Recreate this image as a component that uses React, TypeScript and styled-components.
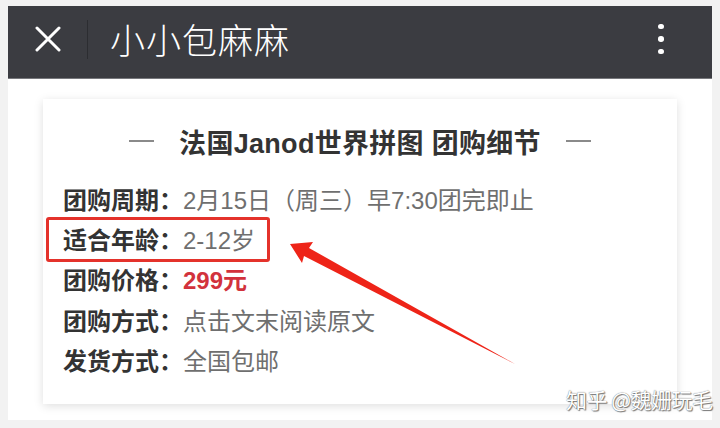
import styled, { createGlobalStyle } from "styled-components";

const GlobalStyle = createGlobalStyle`
  body {
    margin: 0;
    background: #f2f2f2;
    font-family: "Liberation Sans", "Noto Sans CJK SC", sans-serif;
  }
`;

const Page = styled.div`
  position: relative;
  width: 720px;
  height: 428px;
  padding: 6px 8px 8px;
  box-sizing: border-box;
`;

const Phone = styled.div`
  display: flex;
  flex-direction: column;
  height: 414px;
  background: #ffffff;
`;

const TopBar = styled.div`
  display: flex;
  align-items: center;
  height: 72px;
  background: #3b3c41;
  border-bottom: 1px solid #77787c;
  padding: 0 0 0 26px;
`;

const CloseButton = styled.div`
  width: 28px;
  height: 28px;
  display: flex;
  align-items: center;
  justify-content: center;
  margin-top: -6px;
`;

const Divider = styled.div`
  width: 1px;
  height: 39px;
  background: #2c2d31;
  margin: -6px 22px 0 25px;
`;

const BarTitle = styled.div`
  flex: 1;
  color: #ffffff;
  font-family: "Noto Sans CJK SC", sans-serif;
  font-size: 35px;
  font-weight: 300;
  letter-spacing: 1px;
  margin-top: -8px;
`;

const MoreButton = styled.div`
  width: 14px;
  display: flex;
  flex-direction: column;
  align-items: center;
  gap: 7px;
  margin: -6px 44px 0 0;
`;

const Dot = styled.span`
  width: 5.5px;
  height: 5.5px;
  border-radius: 50%;
  background: #ffffff;
`;

const Body = styled.div`
  flex: 1;
  padding: 20px 35px 16px;
`;

const Card = styled.div`
  height: 100%;
  box-sizing: border-box;
  background: #ffffff;
  box-shadow: 0 2px 9px rgba(0, 0, 0, 0.13);
  padding: 24px 20px 0;
`;

const CardTitle = styled.div`
  display: flex;
  align-items: center;
  justify-content: center;
  gap: 25px;
  color: #333333;
  font-size: 27px;
  font-weight: bold;
  letter-spacing: 0.3px;
  margin-bottom: 19px;
  height: 36px;
`;

const Dash = styled.span`
  width: 25px;
  height: 1.5px;
  background: #8a8a8a;
`;

const Rows = styled.div`
  display: flex;
  flex-direction: column;
`;

const Row = styled.div`
  display: flex;
  align-items: center;
  height: 40.4px;
  font-size: 24px;
`;

const Label = styled.span`
  color: #333333;
  font-weight: bold;
`;

const Value = styled.span<{ $accent?: boolean }>`
  color: ${(p) => (p.$accent ? "#d2323c" : "#6f6f6f")};
  font-weight: ${(p) => (p.$accent ? "bold" : "normal")};
`;

const Highlight = styled.div`
  position: absolute;
  left: 46px;
  top: 217px;
  width: 218px;
  height: 39px;
  border: 3px solid #e4322b;
  border-radius: 3px;
`;

const Arrow = styled.svg`
  position: absolute;
  left: 0;
  top: 0;
  pointer-events: none;
`;

const Watermark = styled.div`
  position: absolute;
  left: 566px;
  top: 384px;
  color: #ffffff;
  font-family: "Noto Sans CJK SC", sans-serif;
  font-size: 21px;
  letter-spacing: -0.5px;
  text-shadow: 0 0 1px #555, 1px 1px 1px #777;
`;

const rows: { label: string; value: string; accent?: boolean }[] = [
  { label: "团购周期：", value: "2月15日（周三）早7:30团完即止" },
  { label: "适合年龄：", value: "2-12岁" },
  { label: "团购价格：", value: "299元", accent: true },
  { label: "团购方式：", value: "点击文末阅读原文" },
  { label: "发货方式：", value: "全国包邮" },
];

export default function App() {
  return (
    <Page>
      <GlobalStyle />
      <Phone>
        <TopBar>
          <CloseButton>
            <svg width="26" height="26" viewBox="0 0 26 26">
              <path d="M2 2 L24 24 M24 2 L2 24" stroke="#fff" strokeWidth="3" strokeLinecap="round" />
            </svg>
          </CloseButton>
          <Divider />
          <BarTitle>小小包麻麻</BarTitle>
          <MoreButton>
            <Dot />
            <Dot />
            <Dot />
          </MoreButton>
        </TopBar>
        <Body>
          <Card>
            <CardTitle>
              <Dash />
              <span>法国Janod世界拼图 团购细节</span>
              <Dash />
            </CardTitle>
            <Rows>
              {rows.map((r) => (
                <Row key={r.label}>
                  <Label>{r.label}</Label>
                  <Value $accent={r.accent}>{r.value}</Value>
                </Row>
              ))}
            </Rows>
          </Card>
        </Body>
      </Phone>
      <Highlight />
      <Arrow width="720" height="428" viewBox="0 0 720 428">
        <polygon points="290,244 313,242 309,248 515,364 304,256 302,263" fill="#ee2418" />
      </Arrow>
      <Watermark>知乎 @魏姗玩毛</Watermark>
    </Page>
  );
}
